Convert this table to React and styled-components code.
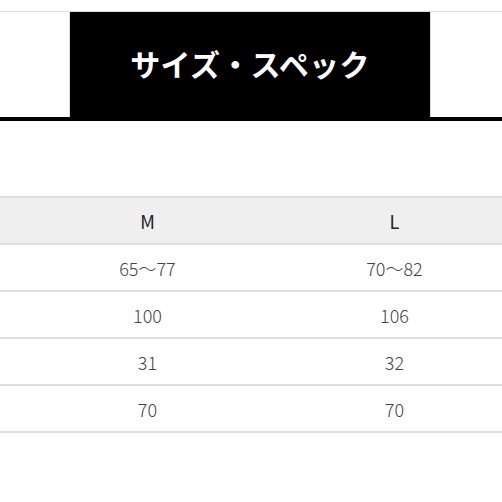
import React from "react";
import styled, { createGlobalStyle } from "styled-components";

const Global = createGlobalStyle`
  html, body { margin: 0; padding: 0; background: #fff; overflow: hidden; }
  body { font-family: "Noto Sans CJK JP", "Noto Sans", sans-serif; }
`;

const Page = styled.div`
  width: 502px;
  height: 502px;
  overflow: hidden;
  padding-top: 11px;
  box-sizing: border-box;
`;

const Tabs = styled.div`
  display: grid;
  grid-template-columns: 70px 360px 1fr;
  border-top: 1px solid #dcdcdc;
  border-bottom: 4px solid #000;
  height: 110px;
  box-sizing: border-box;
`;

const SideCell = styled.div`
  background: #fff;
  border-left: ${(p) => (p.$side === "right" ? "1px solid #dcdcdc" : "none")};
  border-right: ${(p) => (p.$side === "left" ? "1px solid #dcdcdc" : "none")};
`;

const TitleCell = styled.div`
  background: #000;
  color: #fff;
  display: flex;
  align-items: center;
  justify-content: center;
  font-size: 30px;
  font-weight: 700;
  letter-spacing: 0.3px;
  padding-bottom: 3px;
`;

const Table = styled.div`
  margin-top: 75px;
  display: grid;
  grid-template-columns: 24px 247px 247px;
  border-top: 2px solid #dedede;
`;

const Cell = styled.div`
  height: 45px;
  border-bottom: 2px solid #dedede;
  background: ${(p) => (p.$head ? "#efefef" : "#fff")};
  color: ${(p) => (p.$head ? "#222" : "#444")};
  font-size: 18px;
  font-weight: ${(p) => (p.$head ? 400 : 300)};
  display: flex;
  align-items: center;
  justify-content: center;
  white-space: nowrap;
`;

const rows = [
  ["65〜77", "70〜82"],
  ["100", "106"],
  ["31", "32"],
  ["70", "70"],
];

export default function App() {
  return (
    <>
      <Global />
      <Page>
        <Tabs>
          <SideCell $side="left" />
          <TitleCell>サイズ・スペック</TitleCell>
          <SideCell $side="right" />
        </Tabs>
        <Table>
          <Cell $head />
          <Cell $head>M</Cell>
          <Cell $head>L</Cell>
          {rows.map((r, i) => (
            <React.Fragment key={i}>
              <Cell />
              <Cell>{r[0]}</Cell>
              <Cell>{r[1]}</Cell>
            </React.Fragment>
          ))}
        </Table>
      </Page>
    </>
  );
}
